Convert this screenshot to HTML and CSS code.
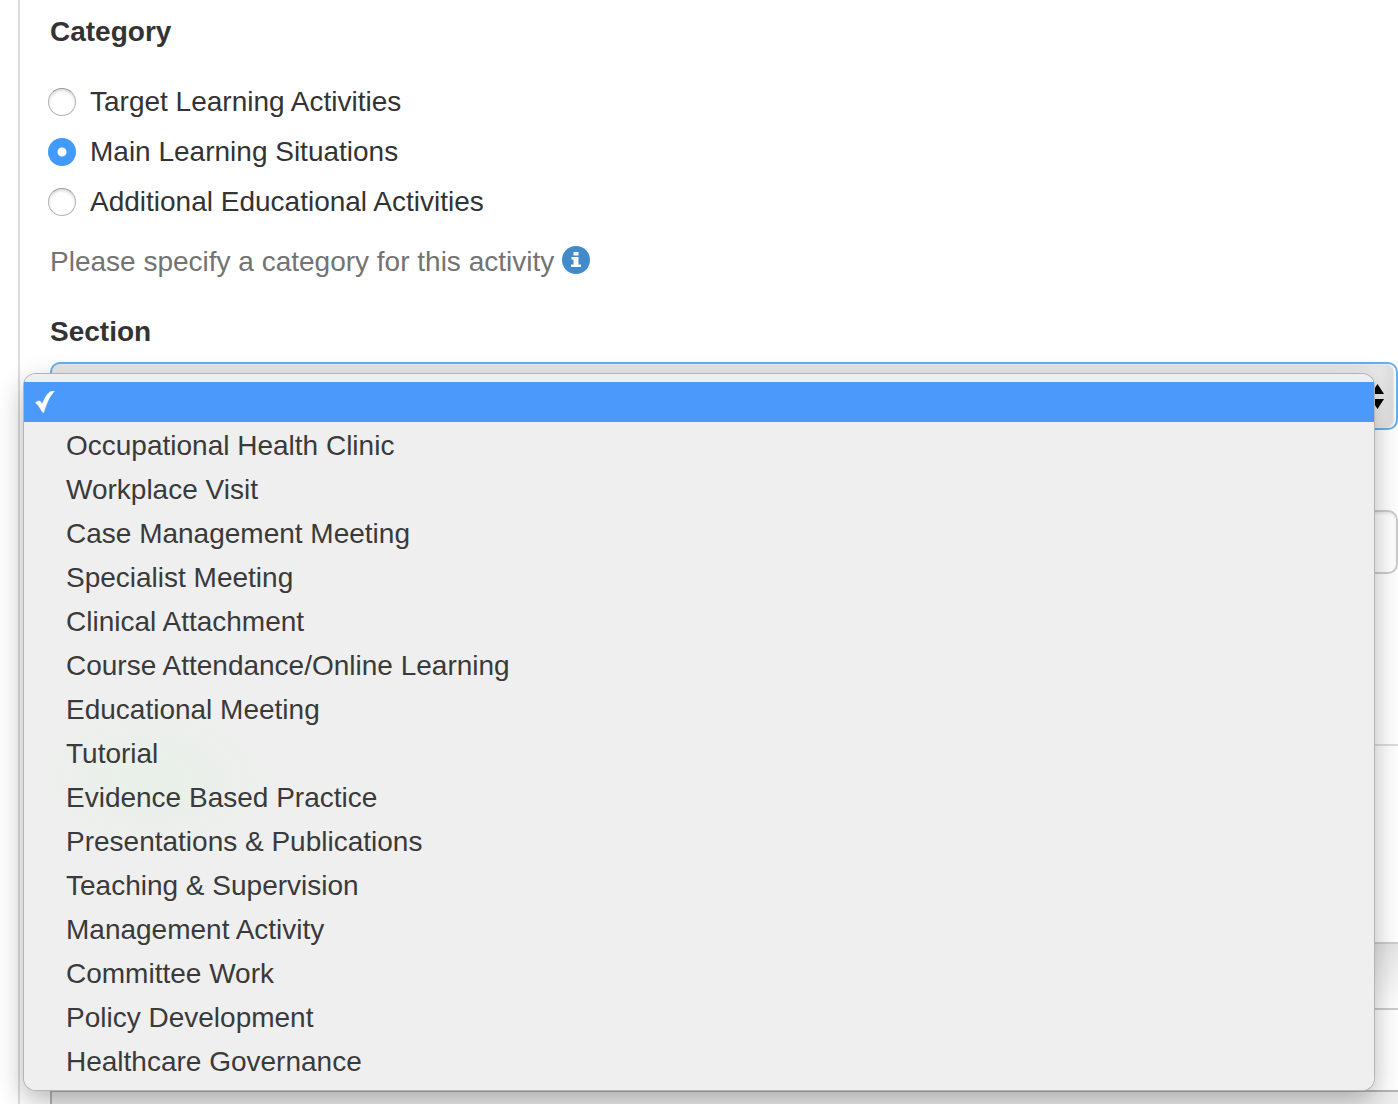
FILE: index.html
```html
<!doctype html>
<html lang="en">
<head>
<meta charset="UTF-8">
<title>Add Activity</title>
<link rel="stylesheet" href="styles.css">
</head>
<body>
	<form class="panel">
		<fieldset class="category">
			<legend>Category</legend>
			<label class="radio"><input type="radio" name="category" value="target">Target Learning Activities</label>
			<label class="radio"><input type="radio" name="category" value="main" checked>Main Learning Situations</label>
			<label class="radio"><input type="radio" name="category" value="additional">Additional Educational Activities</label>
		</fieldset>
		<p class="help">Please specify a category for this activity
			<svg class="info" viewBox="0 0 28 28" aria-hidden="true">
				<circle cx="14" cy="14" r="14" fill="#428bca"/>
				<path d="M11.500 6h5v3.500h-5zM9.500 11h7v7.500h2.500v2.500h-10v-2.500h2.500v-5h-2z" fill="#fff"/>
			</svg>
		</p>

		<label class="title" for="section">Section</label>
		<div class="section-field">
			<select id="section" class="section-select">
				<option></option>
			</select>
			<svg class="arrows" viewBox="0 0 14 26" aria-hidden="true">
				<path d="M7.500 0L14 10H1zM1 15h13L7.500 25z" fill="#000"/>
			</svg>
			<!-- open list -->
			<div class="menu" role="listbox" aria-label="Section">
				<button type="button" role="option" class="item selected" aria-selected="true" aria-label="None">
					<svg class="check" viewBox="0 0 20 22" aria-hidden="true">
						<path d="M.5 12C1.500 10.500 3.500 9.600 4.800 10.200C6 10.800 6.600 12 7.200 13.300C9 8.500 11.500 3.500 14.500 1.200C16 .1 17.500.2 19.300.2C15.500 4.500 12.500 9 8.600 21.700C7.600 21.500 7.300 20.800 6.800 20C4.500 16 3 13.500.5 12z" fill="#fff" stroke="#fff" stroke-width=".6"/>
					</svg>
				</button>
				<button type="button" role="option" class="item">Occupational Health Clinic</button>
				<button type="button" role="option" class="item">Workplace Visit</button>
				<button type="button" role="option" class="item">Case Management Meeting</button>
				<button type="button" role="option" class="item">Specialist Meeting</button>
				<button type="button" role="option" class="item">Clinical Attachment</button>
				<button type="button" role="option" class="item">Course Attendance/Online Learning</button>
				<button type="button" role="option" class="item">Educational Meeting</button>
				<button type="button" role="option" class="item">Tutorial</button>
				<button type="button" role="option" class="item">Evidence Based Practice</button>
				<button type="button" role="option" class="item">Presentations &amp; Publications</button>
				<button type="button" role="option" class="item">Teaching &amp; Supervision</button>
				<button type="button" role="option" class="item">Management Activity</button>
				<button type="button" role="option" class="item">Committee Work</button>
				<button type="button" role="option" class="item">Policy Development</button>
				<button type="button" role="option" class="item">Healthcare Governance</button>
			</div>
		</div>

		<input type="text" class="text" aria-label="Title">
		<hr class="rule">
		<div class="toolbar"></div>
		<div class="editor"></div>
	</form>
</body>
</html>
```

FILE: styles.css
```css
* {
	box-sizing:border-box;
	}

body {
	margin:0;
	background:#fff;
	color:#333;
	font-family:"Liberation Sans", Arial, Helvetica, sans-serif;
	font-size:28px;
	line-height:40px;
	}

.panel {
	display:flex;
	flex-direction:column;
	min-height:100vh;
	margin-left:18px;
	padding:12px 0 0 30px;
	border-left:2px solid #ddd;
	}

.category {
	min-width:0;
	margin:0;
	padding:0;
	border:0;
	}

.category legend {
	padding:0;
	margin-bottom:30px;
	font-weight:bold;
	}

.radio {
	display:flex;
	align-items:center;
	gap:14px;
	margin:0 0 10px -2px;
	}

.radio input {
	appearance:none;
	width:28px;
	height:28px;
	margin:0;
	border:1px solid #b4b4b4;
	border-top-color:#999;
	border-radius:50%;
	background:#fff;
	box-shadow:inset 0 2px 3px #ddd;
	}

.radio input:checked {
	border:0;
	background:radial-gradient(circle, #fff 4px, #429bfb 5px);
	box-shadow:none;
	}

.help {
	margin:10px 0 30px;
	color:#737373;
	}

.info {
	width:28px;
	height:28px;
	vertical-align:-3px;
	}

.title {
	font-weight:bold;
	}

.section-field {
	position:relative;
	margin-top:10px;
	}

.section-select {
	display:block;
	appearance:none;
	width:100%;
	height:68px;
	border:2px solid #66afe9;
	border-radius:10px;
	outline:0;
	background:linear-gradient(#e8e8e8, #f2f2f2);
	box-shadow:inset -2px 0 2px #fff, inset -10px 0 8px #ddd;
	}

.arrows {
	position:absolute;
	top:22px;
	right:14px;
	width:14px;
	height:26px;
	}

.menu {
	position:absolute;
	top:12px;
	left:-26px;
	right:24px;
	padding:8px 0 6px;
	border-radius:12px;
	background:radial-gradient(ellipse 130px 80px at 130px 405px, #e8f0e8, #efefef);
	box-shadow:0 0 0 1px #b4b4b4, 0 10px 28px rgba(0,0,0,.3);
	}

.item {
	display:block;
	width:100%;
	height:44px;
	padding:0 42px;
	border:0;
	background:none;
	color:#3a3a3a;
	font:inherit;
	text-align:left;
	}

.selected {
	height:40px;
	margin-bottom:2px;
	padding:0 11px;
	background:#4a99fb;
	}

.check {
	display:block;
	width:20px;
	height:22px;
	}

.text {
	height:64px;
	margin:80px 0 0;
	border:2px solid #ccc;
	border-radius:10px;
	box-shadow:inset 0 2px 2px #eee;
	}

.rule {
	width:100%;
	margin:170px 0 0;
	border:0;
	border-top:2px solid #ddd;
	}

.toolbar {
	height:68px;
	margin-top:196px;
	border:solid #ccc;
	border-width:2px 0;
	background:linear-gradient(#e6e6e6, #fff);
	}

.editor {
	flex:1;
	margin-top:80px;
	border:solid #b6b6b6;
	border-width:2px 0 0 2px;
	background:#eee;
	}
```
